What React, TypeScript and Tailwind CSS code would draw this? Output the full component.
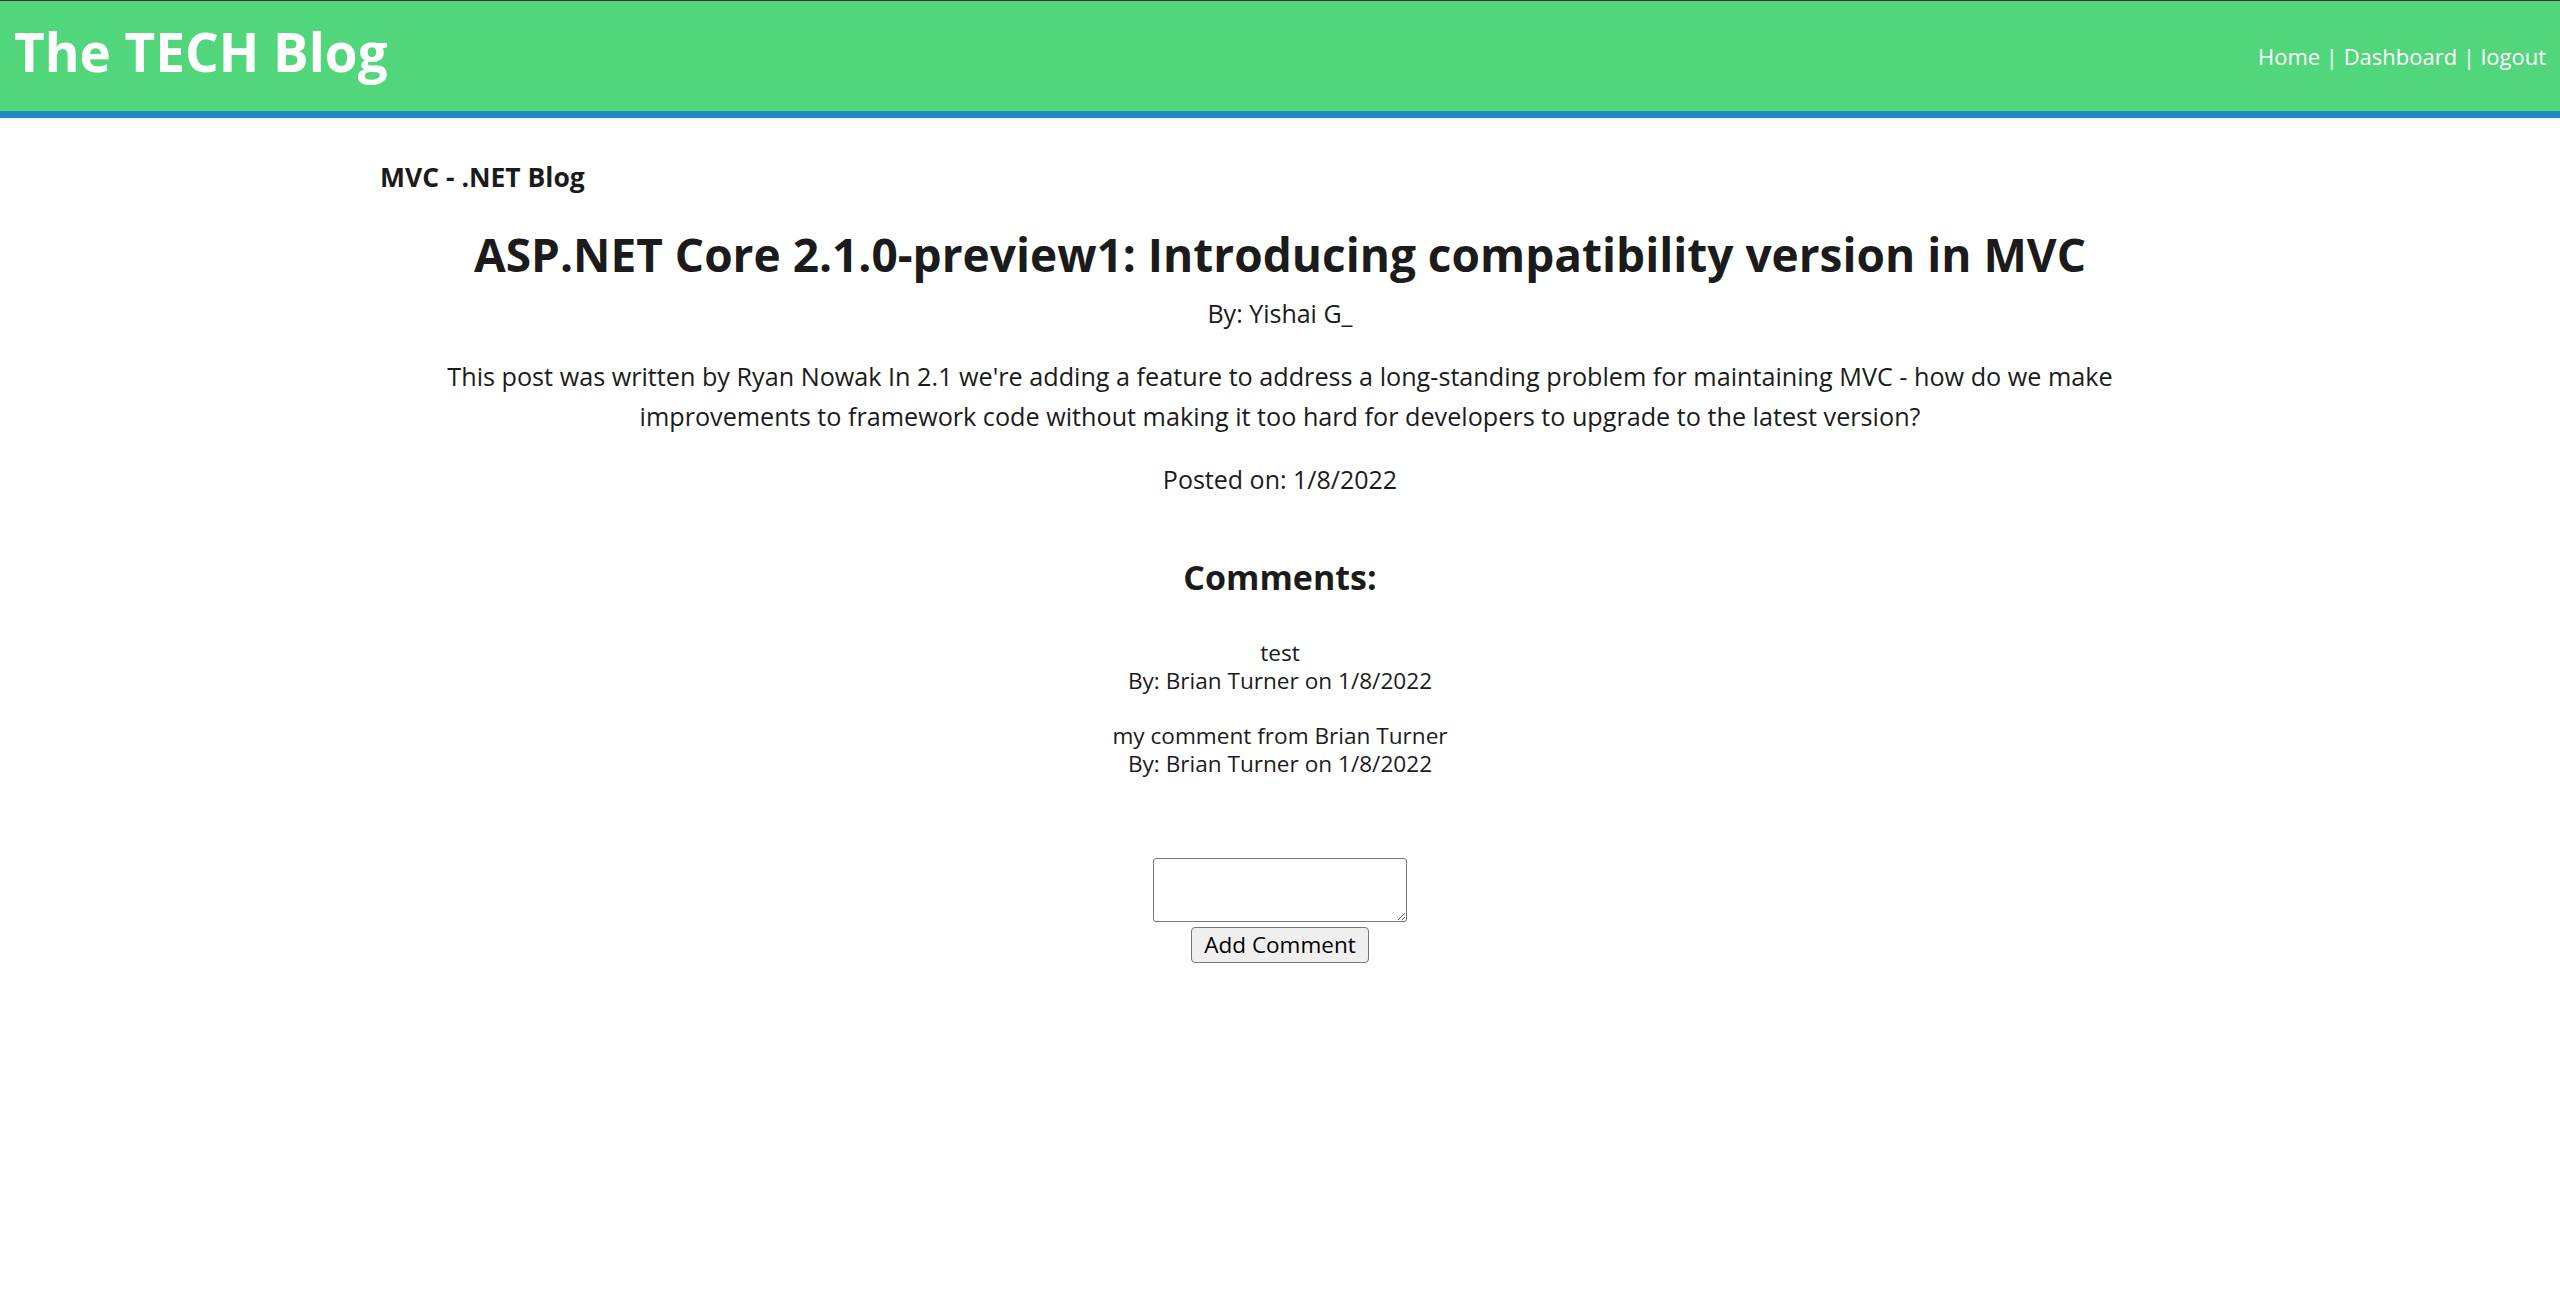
import { useState } from 'react';

interface Comment {
  id: number;
  text: string;
  author: string;
  date: string;
}

const comments: Comment[] = [
  { id: 1, text: 'test', author: 'Brian Turner', date: '1/8/2022' },
  { id: 2, text: 'my comment from Brian Turner', author: 'Brian Turner', date: '1/8/2022' },
];

export default function App() {
  const [comment, setComment] = useState('');

  return (
    <div className="min-h-screen bg-white font-['Open_Sans','Noto_Sans',sans-serif] text-[#1b1b1b]">
      {/* Header */}
      <header className="flex h-[118px] items-start justify-between border-t border-b-[7px] border-t-[#333] border-b-[#1e8bc3] bg-[#52d67c] px-[14px]">
        <h1 className="mt-[15px] text-[53px] font-bold leading-[71px] text-white">The TECH Blog</h1>
        <nav className="mt-[40px] text-[22px] leading-[31px] text-white">
          <a href="#">Home</a> | <a href="#">Dashboard</a> | <a href="#">logout</a>
        </nav>
      </header>

      {/* Post */}
      <main className="mx-auto w-[1800px]">
        <div className="mt-[43px] text-[26.5px] font-bold leading-[32px]">MVC - .NET Blog</div>

        <div className="text-center">
          <h2 className="mt-[29px] text-[46px] font-bold leading-[64px]">
            ASP.NET Core 2.1.0-preview1: Introducing compatibility version in MVC
          </h2>
          <p className="mt-[11px] text-[25px] leading-[32px]">By: Yishai G_</p>
          <p className="mx-auto mt-[27px] max-w-[1780px] text-[25.2px] leading-[40px]">
            This post was written by Ryan Nowak In 2.1 we're adding a feature to address a long-standing problem for
            maintaining MVC - how do we make improvements to framework code without making it too hard for developers to
            upgrade to the latest version?
          </p>
          <p className="mt-[27px] text-[25px] leading-[32px]">Posted on: 1/8/2022</p>
        </div>

        {/* Comments */}
        <div className="flex flex-col items-center">
          <h3 className="mt-[60px] text-[34px] font-bold leading-[45px]">Comments:</h3>
          <div className="mt-[39px] flex flex-col items-center gap-[27px] text-center text-[22.6px] leading-[28px]">
            {comments.map((c) => (
              <div key={c.id}>
                <div>{c.text}</div>
                <div>
                  By: {c.author} on {c.date}
                </div>
              </div>
            ))}
          </div>

          <form className="mt-[80px] flex flex-col items-center gap-[5px]" onSubmit={(e) => e.preventDefault()}>
            <textarea
              value={comment}
              onChange={(e) => setComment(e.target.value)}
              className="block h-[64px] w-[254px] rounded-[3px] border border-[#767676] bg-white"
            />
            <button
              type="submit"
              className="h-[36px] w-[178px] rounded-[4px] border border-[#767676] bg-[#efefef] text-[22.5px] leading-none text-black"
            >
              Add Comment
            </button>
          </form>
        </div>
      </main>
    </div>
  );
}
